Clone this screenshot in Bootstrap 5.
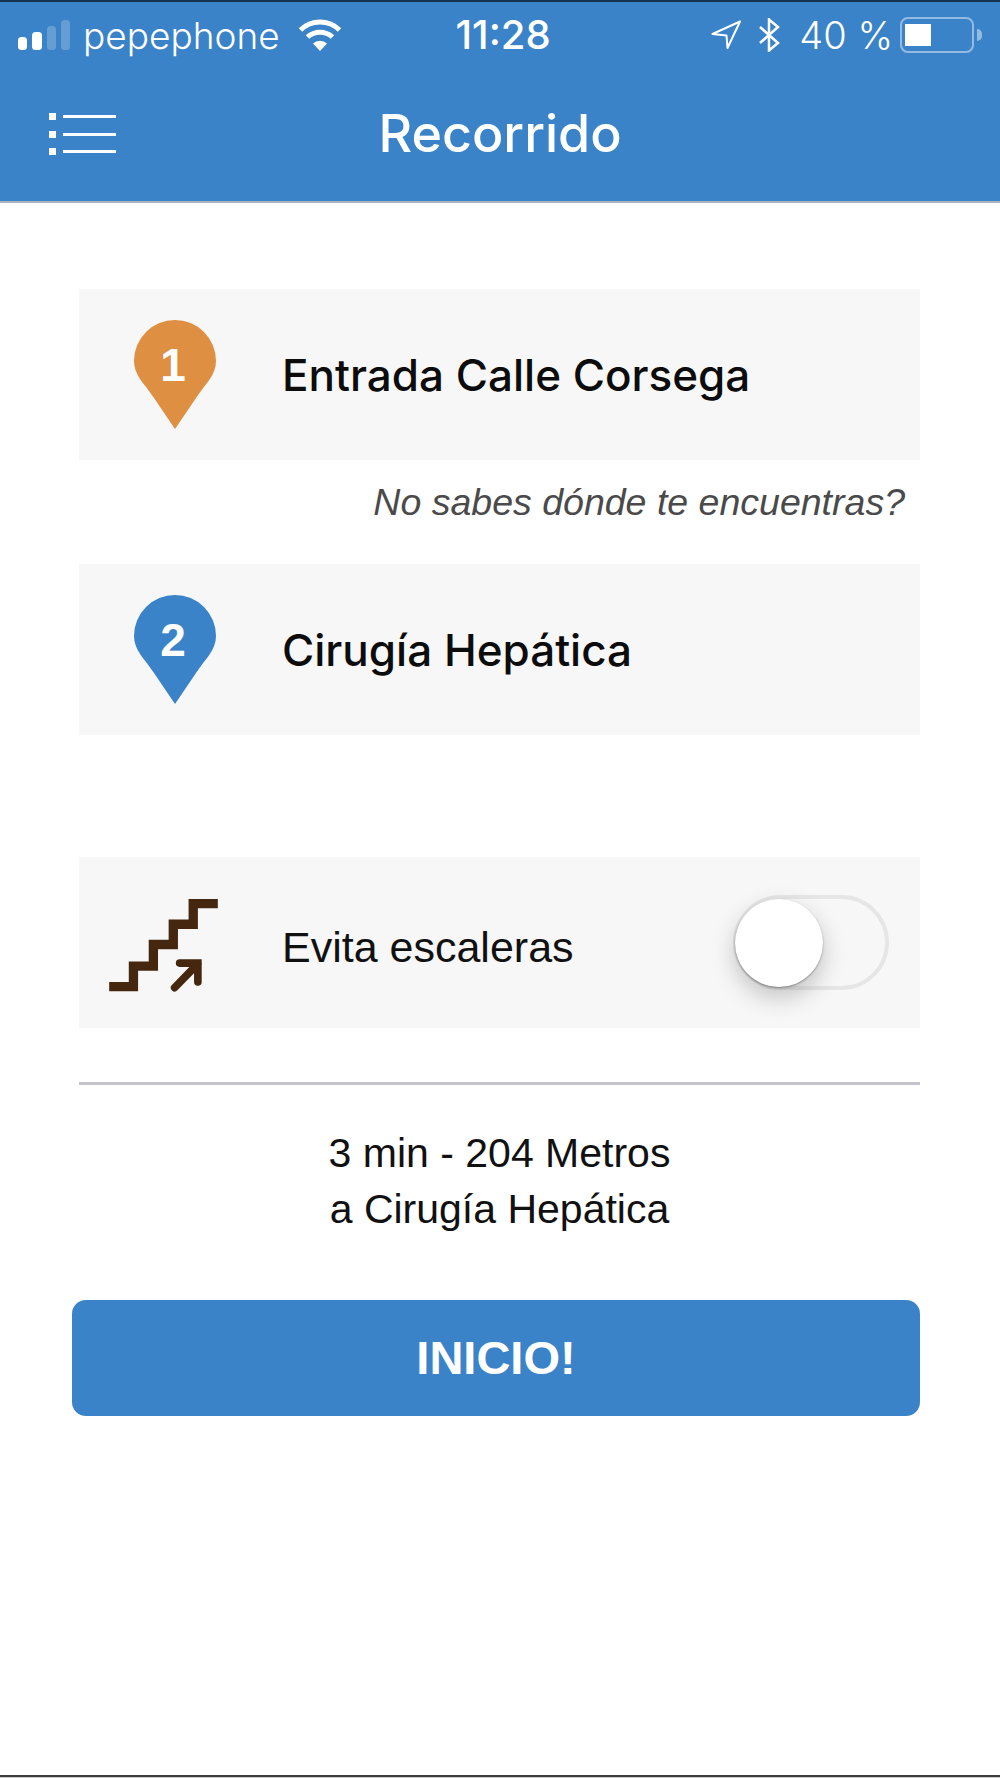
<!DOCTYPE html>
<html lang="es">
<head>
    <meta charset="UTF-8">
    <meta name="viewport" content="width=device-width, initial-scale=1.0">
    <title>Recorrido</title>
    <link href="https://cdn.jsdelivr.net/npm/bootstrap@5.3.0/dist/css/bootstrap.min.css" rel="stylesheet">
    <style>
      body {
          font-family: "Liberation Sans", Arial, sans-serif;
          color: #111;
          background: #fff;
      }
      .app-header {
          height: 203px;
          background: #3b83c8;
          color: #fff;
          border-top: 2px solid #16324f;
          border-bottom: 2px solid #a9b4bf;
      }
      .status-bar {
          display: grid;
          grid-template-columns: 1fr auto 1fr;
          align-items: center;
          height: 50px;
          margin-top: 8px;
          padding: 0 26px 0 18px;
          line-height: 1;
      }
      .carrier {
          font-family: "Inter", sans-serif;
          font-weight: 300;
          margin-left: 13px;
          margin-right: 18px;
          font-size: 37px;
      }
      .clock {
          font-family: "Inter", sans-serif;
          font-weight: 500;
          font-size: 40px;
          padding-left: 14px;
      }
      .battery-level {
          font-family: "Inter", sans-serif;
          font-weight: 300;
          margin: 0 7px 0 19px;
          font-size: 38px;
      }
      .battery-box {
          width: 74px;
          height: 36px;
          border: 2px solid rgba(255, 255, 255, .45);
          border-radius: 8px;
          padding: 5px 3px;
      }
      .battery-fill {
          width: 26px;
          height: 22px;
          background: #fff;
      }
      .battery-tip {
          width: 5px;
          height: 12px;
          margin-left: 3px;
          margin-right: -8px;
          background: rgba(255, 255, 255, .45);
          border-radius: 0 6px 6px 0;
      }
      .title-bar {
          display: grid;
          grid-template-columns: 1fr auto 1fr;
          align-items: center;
          margin-top: 52px;
          padding-left: 49px;
      }
      .screen-title {
          font-family: "Inter", sans-serif;
          font-size: 52px;
          font-weight: 500;
          line-height: 43px;
          margin: 0 0 0 -49px;
      }
      .route-body {
          padding: 86px 80px 0 79px;
      }
      .route-row {
          height: 171px;
          background: #f7f7f7;
          padding-left: 55px;
      }
      .row-icon {
          width: 148px;
          flex-shrink: 0;
      }
      .place-name {
          font-family: "Inter", sans-serif;
          font-size: 44px;
          font-weight: 500;
          color: #0c0c0c;
      }
      .hint {
          font-size: 37.5px;
          font-style: italic;
          color: #4a4a4a;
          text-align: right;
          line-height: 40px;
          padding: 22px 15px 42px 0;
      }
      .stairs-row {
          margin-top: 122px;
          padding-left: 30px;
          padding-right: 31px;
      }
      .stairs-icon {
          width: 173px;
          flex-shrink: 0;
          padding-top: 5px;
      }
      .option-label {
          font-size: 43px;
          padding-top: 10px;
      }
      .switch-track {
          position: relative;
          width: 156px;
          height: 95px;
          margin-left: auto;
          border: 4px solid #e6e6e6;
          border-radius: 48px;
      }
      .switch-knob {
          position: absolute;
          left: -2px;
          top: 0;
          width: 88px;
          height: 88px;
          background: #fff;
          border-radius: 50%;
          box-shadow: 0 1px 2px rgba(0, 0, 0, .35), 0 10px 24px rgba(0, 0, 0, .22);
      }
      .divider {
          height: 3px;
          background: #c4c2cb;
          margin-top: 54px;
      }
      .route-summary {
          font-size: 41px;
          line-height: 56px;
          text-align: center;
          margin-top: 40px;
      }
      .start-btn {
          display: block;
          width: calc(100% + 7px);
          height: 116px;
          margin: 63px 0 0 -7px;
          background: #3b83c8;
          border: 0;
          border-radius: 14px;
          color: #fff;
          font-size: 47px;
          font-weight: 700;
      }
      .start-btn:hover {
          background: #3b83c8;
          color: #fff;
      }
      .page-edge {
          height: 3px;
          background: #3a3a3a;
          border-bottom: 1px solid #ccc;
      }
    </style>
</head>
<body>
    <div class="d-flex flex-column min-vh-100">
        <header class="app-header">
            <div class="status-bar">
                <div class="d-flex align-items-center">
                    <svg width="52" height="30" viewBox="0 0 52 30">
                        <rect x="0" y="17" width="9" height="13" rx="3.5" fill="#fff"/>
                        <rect x="14" y="12" width="10" height="18" rx="3.5" fill="#fff"/>
                        <rect x="29" y="6" width="9" height="24" rx="3.5" fill="#fff" fill-opacity=".22"/>
                        <rect x="43" y="0" width="9" height="30" rx="3.5" fill="#fff" fill-opacity=".22"/>
                    </svg>
                    <span class="carrier">pepephone</span>
                    <svg width="44" height="32" viewBox="0 0 44 32">
                        <path d="M2.5 11A28 28 0 0 1 41.5 11" fill="none" stroke="#fff" stroke-width="5"/>
                        <path d="M9.5 18A18.5 18.5 0 0 1 34.5 18" fill="none" stroke="#fff" stroke-width="5"/>
                        <path d="M22 32L15 24.500A10 10 0 0 1 29 24.500Z" fill="#fff"/>
                    </svg>
                </div>
                <div class="clock">11:28</div>
                <div class="d-flex align-items-center justify-content-end">
                    <svg class="me-3" width="31" height="30" viewBox="0 0 31 30">
                        <path d="M29 1.500L1.500 14L15.500 15.500L16.500 28Z" fill="none" stroke="#fff" stroke-width="2" stroke-linejoin="round"/>
                    </svg>
                    <svg width="22" height="34" viewBox="0 0 22 34">
                        <path d="M2 9L20 25L11 32.500V1.500L20 9L2 25" fill="none" stroke="#fff" stroke-width="2.500"/>
                    </svg>
                    <span class="battery-level">40 %</span>
                    <div class="battery-box"><div class="battery-fill"></div></div>
                    <div class="battery-tip"></div>
                </div>
            </div>
            <div class="title-bar">
                <svg width="67" height="43" viewBox="0 0 67 43">
                    <g fill="#fff">
                        <rect x="0" y="1" width="7" height="7"/>
                        <rect x="0" y="19" width="7" height="7"/>
                        <rect x="0" y="36" width="7" height="7"/>
                        <rect x="14" y="3" width="53" height="3"/>
                        <rect x="14" y="21" width="53" height="3"/>
                        <rect x="14" y="38" width="53" height="3"/>
                    </g>
                </svg>
                <h1 class="screen-title">Recorrido</h1>
                <div></div>
            </div>
        </header>

        <main class="route-body flex-grow-1">
            <div class="route-row d-flex align-items-center">
                <div class="row-icon">
                    <svg width="82" height="109" viewBox="0 0 82 109">
                        <path d="M41 0A41 41 0 0 1 82 41C82 55 72 63 62 78L41 109L20 78C10 63 0 55 0 41A41 41 0 0 1 41 0Z" fill="#de8f42"/>
                        <text x="39" y="61" text-anchor="middle" fill="#fff" font-family="Liberation Sans, sans-serif" font-size="46" font-weight="700">1</text>
                    </svg>
                </div>
                <span class="place-name">Entrada Calle Corsega</span>
            </div>
            <div class="hint">No sabes dónde te encuentras?</div>
            <div class="route-row d-flex align-items-center">
                <div class="row-icon">
                    <svg width="82" height="109" viewBox="0 0 82 109">
                        <path d="M41 0A41 41 0 0 1 82 41C82 55 72 63 62 78L41 109L20 78C10 63 0 55 0 41A41 41 0 0 1 41 0Z" fill="#3b83c8"/>
                        <text x="39" y="61" text-anchor="middle" fill="#fff" font-family="Liberation Sans, sans-serif" font-size="46" font-weight="700">2</text>
                    </svg>
                </div>
                <span class="place-name">Cirugía Hepática</span>
            </div>

            <div class="route-row stairs-row d-flex align-items-center">
                <div class="stairs-icon">
                    <svg width="109" height="93" viewBox="118 145 327 280">
                        <path d="M118 409H191V347H251V282H311V221H371V159H445" fill="none" stroke="#45260f" stroke-width="28"/>
                        <path d="M315 412L385 340M330 338H385V395" fill="none" stroke="#45260f" stroke-width="23" stroke-linecap="round"/>
                    </svg>
                </div>
                <span class="option-label">Evita escaleras</span>
                <div class="switch-track"><div class="switch-knob"></div></div>
            </div>

            <div class="divider"></div>
            <div class="route-summary">3 min - 204 Metros<br>a Cirugía Hepática</div>
            <button type="button" class="btn start-btn">INICIO!</button>
        </main>
        <div class="page-edge"></div>
    </div>
</body>
</html>
